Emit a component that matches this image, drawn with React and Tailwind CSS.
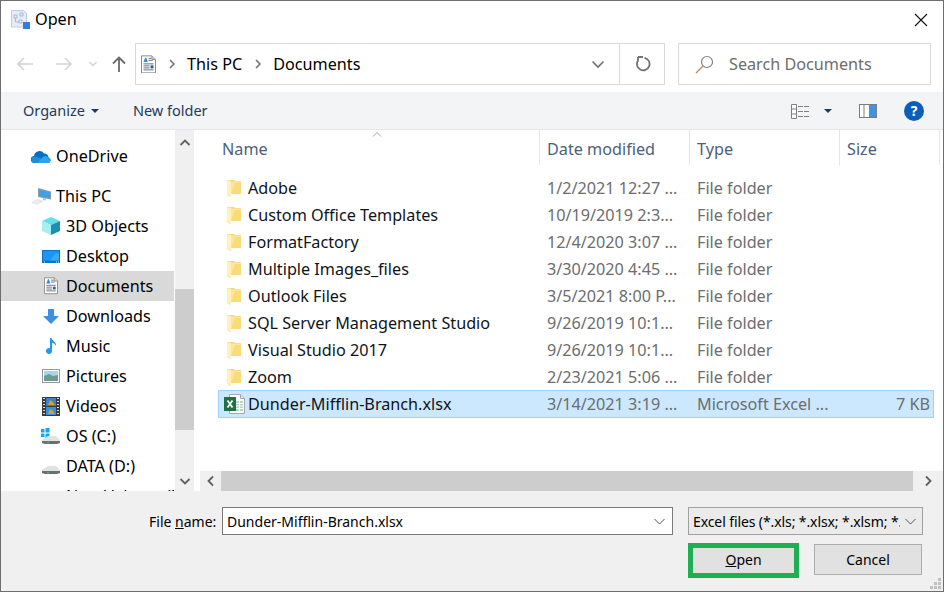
const Folder = () => (
  <svg width="14" height="17" viewBox="0 0 14 17" className="shrink-0">
    <path d="M0 0h7l1 1h6v13H4v3l-4-2z" fill="#f5d57a" />
    <path d="M4 1.500h10V14H4z" fill="#ffe59a" />
    <path d="M0 0.500h3.500L4 2v14.500L0 14.500z" fill="#fff0bd" />
    <path d="M8 3h6v11H4z" fill="#f7d76f" opacity=".7" />
  </svg>
);
const DocIcon = ({ s = 16 }) => (
  <svg width={s} height={s * 1.25} viewBox="0 0 15 18" className="shrink-0">
    <path d="M.5.5h10.500l3.500 3.500v13.500H.5z" fill="#fff" stroke="#8c8c8c" />
    <path d="M11 .5v3.500h3.500" fill="#ddd" stroke="#8c8c8c" />
    <path d="M2.500 6.500L4.300 2h.8l1.800 4.500z" fill="#2f8ae0" />
    <path d="M7.500 3h3M7.500 5h4M2.500 8.500h10M2.500 10.500h6M2.500 12.500h6M2.500 14.500h10" stroke="#66727e" />
    <path d="M9.500 10h3v3h-3z" fill="#2f5f90" />
  </svg>
);
const Xlsx = () => (
  <svg width="21" height="20" viewBox="0 0 21 20" className="shrink-0">
    <path d="M5.500.5h11l4 4v15h-15z" fill="#fff" stroke="#a8a8a8" />
    <path d="M16.500.5v4h4" fill="#e4e4e4" stroke="#a8a8a8" />
    <path d="M12 7h7v10h-7z" fill="#b5d8c2" />
    <path d="M12 9.500h7M12 12h7M12 14.500h7M15.500 7v10" stroke="#fff" />
    <rect x="0" y="3" width="12" height="14" fill="#1e7145" />
    <path d="M3.500 6.500l5 7M8.500 6.500l-5 7" stroke="#fff" strokeWidth="1.800" />
  </svg>
);
const Cloud = () => (
  <svg width="20" height="13" viewBox="0 0 20 13" className="shrink-0">
    <path d="M3.500 13A3.500 3.500 0 0 1 3 6 5.500 5.500 0 0 1 13 3.500 4 4 0 0 1 17.500 7.500 2.800 2.800 0 0 1 17 13z" fill="#0a6cc4" />
    <path d="M3 6.300a3.400 3.400 0 0 0 .5 6.700H10L14 9z" fill="#1b8fdc" />
    <path d="M6.500 13L11 8a3.800 3.800 0 0 1 6.500-.5 2.800 2.800 0 0 1-.5 5.500z" fill="#2aa4ee" />
  </svg>
);
const Pc = () => (
  <svg width="20" height="17" viewBox="0 0 20 17" className="shrink-0">
    <path d="M7 0l13 3.500v8L7 9z" fill="#8a9ba8" />
    <path d="M8 1.500l11 3v5.700L8 8z" fill="#38a3e8" />
    <path d="M12 10l3 .6v2l-3-.6z" fill="#bdbdbd" />
    <path d="M0 14.500L7 11l6 2-7 4z" fill="#e4e4e4" />
    <path d="M3 14.500L7 12.500M5 15.500L9 13.500" stroke="#f6f6f6" />
  </svg>
);
const Cube = () => (
  <svg width="18" height="18" viewBox="0 0 18 18" className="shrink-0">
    <path d="M9 0l9 4-9 4-9-4z" fill="#63dfe6" />
    <path d="M0 4l9 4v10l-9-4z" fill="#a7eef0" />
    <path d="M9 8l9-4v10l-9 4z" fill="#1a8fb0" />
  </svg>
);
const Desk = () => (
  <svg width="18" height="13" viewBox="0 0 18 13" className="shrink-0">
    <rect width="18" height="13" fill="#0a74c8" />
    <rect x="1" y="1" width="16" height="9.500" fill="#1c95f2" />
    <path d="M8 10.500L14 3l3 1v6.500z" fill="#38a9f5" />
    <path d="M2 11.500h1v1H2zM14 11.500h1v1h-1zM16 11.500h1v1h-1z" fill="#cfe8fb" />
  </svg>
);
const Down = () => (
  <svg width="16" height="15" viewBox="0 0 16 15" className="shrink-0"><path d="M5 0h6v7h5l-8 8-8-8h5z" fill="#3b8fe0" /></svg>
);
const Note = () => (
  <svg width="12" height="16" viewBox="0 0 12 16" className="shrink-0"><path d="M5 0h1.500c.5 3 5 3.500 4.500 8-.8-2-2.500-3-4-3.200V13a3 3 0 1 1-2-2.800z" fill="#1a9af0" /></svg>
);
const Pics = () => (
  <svg width="18" height="14" viewBox="0 0 18 14" className="shrink-0">
    <rect x=".5" y=".5" width="17" height="13" fill="#fff" stroke="#989898" />
    <rect x="2" y="2" width="14" height="5" fill="#a9d4ee" />
    <path d="M2 7l5-2 4 2 5-1v6H2z" fill="#6a9c94" />
  </svg>
);
const Film = () => (
  <svg width="18" height="19" viewBox="0 0 18 19" className="shrink-0">
    <rect width="18" height="19" fill="#3a3a3a" />
    <path d="M1 1.500h2M1 4.500h2M1 7.500h2M1 10.500h2M1 13.500h2M1 16.500h2M15 1.500h2M15 4.500h2M15 7.500h2M15 10.500h2M15 13.500h2M15 16.500h2" stroke="#ddd" />
    <rect x="4" y="1" width="10" height="8" fill="#3b7fd0" />
    <rect x="4" y="10" width="10" height="8" fill="#3b8fe0" />
    <path d="M6 8l2-5 3 2 2 3zM6 17l2-5 3 2 2 3z" fill="#d8a030" />
  </svg>
);
const Drive = ({ win }) => (
  <svg width="20" height="17" viewBox="0 0 20 17" className="shrink-0">
    {win ? <path d="M0 1h3.500v3.500H0zM4.500 0H8.500v4.500H4.500zM0 5.500h3.500V9H0zM4.500 5.500H8.500V10H4.500z" fill="#1aa3ee" /> : null}
    <path d="M1 12l6-4h8l4 4v1H1z" fill="#e2e2e2" />
    <path d="M1 13h18v2l-3 1H4l-3-1z" fill="#6e6e6e" />
    <path d="M6 14h2v1H6z" fill="#3fd060" />
  </svg>
);
const NavItem = ({ icon, label, sel }) => (
  <div className={`flex h-[30px] items-center whitespace-nowrap ${sel ? "bg-[#d9d9d9]" : ""}`}>
    <div className="flex w-[65px] shrink-0 items-center justify-center pl-[40px] pr-[5px]">{icon}</div>
    <span>{label}</span>
  </div>
);
const files = [
  ["Adobe", "1/2/2021 12:27 ..."],
  ["Custom Office Templates", "10/19/2019 2:3..."],
  ["FormatFactory", "12/4/2020 3:07 ..."],
  ["Multiple Images_files", "3/30/2020 4:45 ..."],
  ["Outlook Files", "3/5/2021 8:00 P..."],
  ["SQL Server Management Studio", "9/26/2019 10:1..."],
  ["Visual Studio 2017", "9/26/2019 10:1..."],
  ["Zoom", "2/23/2021 5:06 ..."],
];
const Row = ({ icon, name, date, type, size, sel }) => (
  <div className={`flex items-center border ${sel ? "h-[28px] border-[#99d1ff] bg-[#cce8ff]" : "h-[27px] border-transparent pt-[1px]"}`}>
    <div className="flex w-[29px] shrink-0 justify-center pl-[1px]">{icon}</div>
    <span className="w-[299px] shrink-0 truncate text-[#0f1419]">{name}</span>
    <span className="w-[150px] shrink-0 text-[#6d6d6d]">{date}</span>
    <span className="w-[150px] shrink-0 text-[#6d6d6d]">{type}</span>
    <span className="w-[83px] shrink-0 text-right text-[#6d6d6d]">{size}</span>
  </div>
);
const Chev = ({ d, c = "#606060" }) => (
  <svg width="14" height="14" viewBox="0 0 14 14"><path d={d} fill="none" stroke={c} strokeWidth="1.800" /></svg>
);
export default function App() {
  return (
    <div className="flex h-[592px] w-[944px] flex-col overflow-hidden border border-[#6e6e6e] bg-white text-[16.2px] text-black [font-family:'Noto_Sans',sans-serif]">
      <div className="flex h-[38px] shrink-0 items-center justify-between pb-[1px] pl-[10px] pr-[15px]">
        <div className="flex items-center gap-[5px]">
          <svg width="19" height="20" viewBox="0 0 19 20">
            <path d="M.5 1.500h12l3 3V18H.5z" fill="#e6ebf6" stroke="#c2cce0" />
            <path d="M3 6h3v3H3zM9 4h3v3H9zM8 11h3v3H8zM4.500 9v4h3.500" fill="none" stroke="#a9b8d6" />
            <rect x="12" y="13" width="7" height="7" fill="#2f80d8" />
          </svg>
          <span>Open</span>
        </div>
        <svg width="14" height="14" viewBox="0 0 14 14"><path d="M1 1l12 12M13 1L1 13" stroke="#111" strokeWidth="1.100" /></svg>
      </div>
      <div className="flex h-[53px] shrink-0 items-start pl-[15px] pt-[4px]">
        <div className="flex h-[42px] w-[119px] shrink-0 items-center">
          <svg width="18" height="14" viewBox="0 0 18 14" className="mr-[21px]"><path d="M17 7H2M8 1L2 7l6 6" fill="none" stroke="#d4d4d4" strokeWidth="1.700" /></svg>
          <svg width="18" height="14" viewBox="0 0 18 14" className="mr-[16px]"><path d="M1 7h15M10 1l6 6-6 6" fill="none" stroke="#d4d4d4" strokeWidth="1.700" /></svg>
          <svg width="8" height="6" viewBox="0 0 8 6" className="mr-[15px]"><path d="M.5 1L4 4.500 7.500 1" fill="none" stroke="#d4d4d4" strokeWidth="1.400" /></svg>
          <svg width="14" height="16" viewBox="0 0 14 16"><path d="M7 16V2M1 7.500L7 1.500l6 6" fill="none" stroke="#6a6a6a" strokeWidth="1.800" /></svg>
        </div>
        <div className="flex h-[42px] w-[530px] shrink-0 items-center border border-[#d9d9d9]">
          <div className="ml-[5px] mr-[13px]"><DocIcon s={15} /></div>
          <svg width="7" height="10" viewBox="0 0 7 10" className="mr-[11px]"><path d="M1 1l4 4-4 4" fill="none" stroke="#6f6f6f" strokeWidth="1.500" /></svg>
          <span>This PC</span>
          <svg width="7" height="10" viewBox="0 0 7 10" className="ml-[13px] mr-[11px]"><path d="M1 1l4 4-4 4" fill="none" stroke="#6f6f6f" strokeWidth="1.500" /></svg>
          <span>Documents</span>
          <svg width="14" height="9" viewBox="0 0 14 9" className="ml-auto mr-[14px]"><path d="M1.500 1.500L7 7l5.500-5.500" fill="none" stroke="#6f6f6f" strokeWidth="1.600" /></svg>
          <div className="flex h-full w-[45px] items-center justify-center border-l border-[#d9d9d9] pl-[2px]">
            <svg width="16" height="16" viewBox="0 0 16 16"><path d="M9.500 1.800A6.300 6.300 0 1 1 3.200 4.200M8 1h-5M3 1v4.500" fill="none" stroke="#727272" strokeWidth="1.800" /></svg>
          </div>
        </div>
        <div className="ml-[13px] flex h-[42px] w-[253px] shrink-0 items-center border border-[#d9d9d9] pl-[16px] text-[#6d6d6d]">
          <svg width="19" height="19" viewBox="0 0 19 19" className="mr-[15px]"><circle cx="12" cy="7" r="5.500" fill="none" stroke="#808080" strokeWidth="1.200" /><path d="M8 11l-7 7" stroke="#b08a5a" strokeWidth="1.300" /></svg>
          <span>Search Documents</span>
        </div>
      </div>
      <div className="flex h-[38px] shrink-0 items-center border-b border-[#e4e6ea] bg-[#f3f4f6] pl-[22px] pr-[19px] pt-[1px] text-[14.5px] text-[#1e3a5f]">
        <span>Organize</span>
        <svg width="8" height="4" viewBox="0 0 8 4" className="ml-[6px]"><path d="M0 0h8L4 4z" fill="#1e3a5f" /></svg>
        <span className="ml-[34px]">New folder</span>
        <svg width="19" height="15" viewBox="0 0 19 15" className="ml-auto">
          <path d="M.5.500h5v14h-5zM.5 5h5M.5 10h5" fill="#fff" stroke="#808080" />
          <path d="M7 2.500h12M7 7.500h12M7 12.500h12" stroke="#808080" strokeDasharray="5 1" />
        </svg>
        <svg width="8" height="4" viewBox="0 0 8 4" className="ml-[14px]"><path d="M0 0h8L4 4z" fill="#1e3a5f" /></svg>
        <svg width="18" height="14" viewBox="0 0 18 14" className="ml-[27px]">
          <rect x=".5" y=".5" width="17" height="13" fill="#fff" stroke="#7d7d7d" />
          <path d="M5 0v14" stroke="#7d7d7d" />
          <rect x="10" y="1" width="7" height="12" fill="#3b94e6" />
        </svg>
        <div className="ml-[27px] flex h-[20px] w-[20px] items-center justify-center rounded-full bg-[#0a5fb8] text-[14px] font-bold leading-none text-white">?</div>
      </div>
      <div className="flex min-h-0 flex-1">
        <div className="w-[173px] shrink-0 overflow-hidden pt-[11px]">
          <div className="-ml-[10px]"><NavItem icon={<Cloud />} label="OneDrive" /></div>
          <div className="h-[10px]" />
          <div className="-ml-[10px]"><NavItem icon={<Pc />} label="This PC" /></div>
          <NavItem icon={<Cube />} label="3D Objects" />
          <NavItem icon={<Desk />} label="Desktop" />
          <NavItem icon={<DocIcon s={14} />} label="Documents" sel />
          <NavItem icon={<Down />} label="Downloads" />
          <NavItem icon={<Note />} label="Music" />
          <NavItem icon={<Pics />} label="Pictures" />
          <NavItem icon={<Film />} label="Videos" />
          <NavItem icon={<Drive win />} label="OS (C:)" />
          <NavItem icon={<Drive />} label="DATA (D:)" />
          <NavItem icon={<Drive />} label="New Volume (E:)" />
        </div>
        <div className="ml-[1px] flex w-[19px] shrink-0 flex-col bg-[#f0f0f0]">
          <div className="flex h-[26px] items-center justify-center"><Chev d="M2.500 9L7 4.500 11.500 9" /></div>
          <div className="h-[133px]" />
          <div className="h-[141px] bg-[#cdcdcd]" />
          <div className="flex flex-1 items-end justify-center pb-[3px]"><Chev d="M2.500 5L7 9.500 11.500 5" /></div>
        </div>
        <div className="flex min-w-0 flex-1 flex-col pl-[6px]">
          <div className="flex h-[35px] shrink-0 text-[#4c607a]">
            <div className="relative flex w-[340px] shrink-0 items-center border-r border-[#e5e5e5] pl-[22px] pt-[3px]">
              Name
              <svg width="10" height="5" viewBox="0 0 10 5" className="absolute left-[172px] top-[2px]"><path d="M1 4.500L5 .5l4 4" fill="none" stroke="#a0a0a0" /></svg>
            </div>
            <div className="flex w-[150px] shrink-0 items-center border-r border-[#e5e5e5] pl-[7px] pt-[3px]">Date modified</div>
            <div className="flex w-[150px] shrink-0 items-center border-r border-[#e5e5e5] pl-[7px] pt-[3px]">Type</div>
            <div className="flex w-[100px] shrink-0 items-center border-r border-[#e5e5e5] pl-[7px] pt-[3px]">Size</div>
          </div>
          <div className="flex-1 pl-[18px] pr-[9px] pt-[9px]">
            {files.map((f) => (
              <Row key={f[0]} icon={<Folder />} name={f[0]} date={f[1]} type="File folder" />
            ))}
            <Row sel icon={<Xlsx />} name="Dunder-Mifflin-Branch.xlsx" date="3/14/2021 3:19 ..." type="Microsoft Excel ..." size="7 KB" />
          </div>
          <div className="flex h-[20px] shrink-0 bg-[#f0f0f0]">
            <div className="flex w-[21px] items-center justify-center"><Chev d="M9 2.500L4.500 7 9 11.500" /></div>
            <div className="w-[692px] bg-[#cdcdcd]" />
            <div className="flex flex-1 items-center justify-center"><Chev d="M5 2.500L9.500 7 5 11.500" /></div>
          </div>
        </div>
      </div>
      <div className="flex h-[100px] shrink-0 flex-col bg-[#f0f0f0] text-[14px]">
        <div className="mt-[16px] flex h-[28px] items-center">
          <span className="ml-[148px] w-[73px] shrink-0">File <span className="underline">n</span>ame:</span>
          <div className="flex h-[28px] w-[451px] shrink-0 items-center justify-between border border-[#7a7a7a] bg-white pl-[4px] pr-[7px]">
            <span>Dunder-Mifflin-Branch.xlsx</span>
            <svg width="11" height="7" viewBox="0 0 11 7"><path d="M.5 1l5 5 5-5" fill="none" stroke="#555" /></svg>
          </div>
          <div className="ml-[15px] flex h-[28px] w-[235px] shrink-0 items-center border border-[#a0a0a0] bg-[#ebebeb] pl-[4px] pr-[6px]">
            <span className="w-[207px] overflow-hidden whitespace-nowrap tracking-[-0.1px]">Excel files (*.xls; *.xlsx; *.xlsm; *.xlsb)</span>
            <svg width="11" height="7" viewBox="0 0 11 7" className="ml-auto"><path d="M.5 1l5 5 5-5" fill="none" stroke="#555" /></svg>
          </div>
        </div>
        <div className="mt-[8px] flex items-start">
          <div className="ml-[687px] flex h-[35px] w-[111px] shrink-0 items-center justify-center border-[5px] border-[#1fae51] bg-[#e1e1e1] pb-[2px]"><span><span className="underline">O</span>pen</span></div>
          <div className="ml-[15px] mt-[1px] flex h-[31px] w-[108px] shrink-0 items-center justify-center border border-[#adadad] bg-[#e1e1e1]">Cancel</div>
          <svg width="12" height="12" viewBox="0 0 12 12" className="ml-[7px] mt-[35px] shrink-0"><path d="M9 0h3v3H9zM5 4h3v3H5zM9 4h3v3H9zM1 8h3v3H1zM5 8h3v3H5zM9 8h3v3H9z" fill="#c0c0c0" /></svg>
        </div>
      </div>
    </div>
  );
}
